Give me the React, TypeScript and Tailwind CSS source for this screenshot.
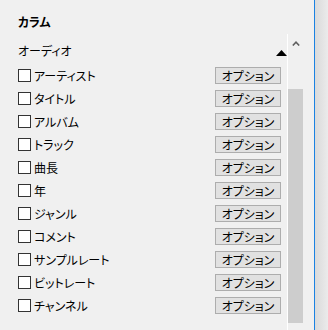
const items = [
  "アーティスト",
  "タイトル",
  "アルバム",
  "トラック",
  "曲長",
  "年",
  "ジャンル",
  "コメント",
  "サンプルレート",
  "ビットレート",
  "チャンネル",
];

const font = "font-['Noto_Sans_CJK_JP','Noto_Sans',sans-serif] [font-feature-settings:'palt']";

const App = () => {
  return (
    <div className={`flex h-[330px] w-[328px] overflow-hidden bg-[#f0f0f0] text-[12px] leading-[16px] text-black ${font}`}>
      <div className="flex w-[314px] flex-col">
        <div className="h-[34px] pl-[18px] pt-[14px] font-bold">カラム</div>
        <div className="flex flex-1">
          <div className="w-[287px]">
            <div className="flex h-[30px] items-start pl-[18px] pt-[9px]">
              <span>オーディオ</span>
              <svg className="ml-auto mt-[7px]" width="11" height="6" viewBox="0 0 11 6">
                <polygon points="5.5,0 11,6 0,6" fill="#000" />
              </svg>
            </div>
            {items.map((label) => (
              <div key={label} className="flex h-[23px] items-center pl-[18px] pr-[6px]">
                <span className="h-[13px] w-[13px] shrink-0 border border-[#333] bg-white" />
                <span className="ml-[3px]">{label}</span>
                <button className="ml-auto flex h-[17px] w-[66px] items-center justify-center border border-[#adadad] bg-[#e1e1e1] text-[12px] leading-none">
                  オプション
                </button>
              </div>
            ))}
          </div>
          <div className="w-px bg-white" />
          <div className="flex w-[16px] flex-col">
            <div className="flex h-[17px] items-start justify-center pt-[7px]">
              <svg width="8" height="5" viewBox="0 0 8 5">
                <polyline points="0.8,4.5 4,1.2 7.2,4.5" fill="none" stroke="#606060" strokeWidth="1.6" />
              </svg>
            </div>
            <div className="h-[38px]" />
            <div className="h-[234px] w-[15px] bg-[#cdcdcd]" />
          </div>
        </div>
      </div>
      <div className="w-px bg-[#1a82e2]" />
      <div className="flex-1 bg-gradient-to-r from-[#dadada] to-[#ebebeb]" />
    </div>
  );
};

export default App;
